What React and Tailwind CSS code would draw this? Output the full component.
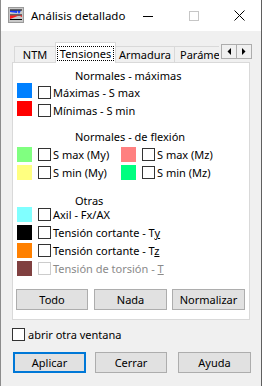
import React from "react";

function Check({ disabled }) {
  return (
    <div
      className={
        disabled
          ? "w-[13px] h-[13px] shrink-0 bg-white border border-[#cccccc]"
          : "w-[13px] h-[13px] shrink-0 bg-white border border-[#333333]"
      }
    />
  );
}

function Row({ color, label, low, disabled }) {
  return (
    <div className="flex items-start">
      <div className={"w-[15px] h-[15px] mt-[1px] shrink-0 " + color} />
      <div
        className={
          (low ? "mt-[4px] " : "mt-[2px] ") + "ml-[6px] flex items-center h-[13px]"
        }
      >
        <Check disabled={disabled} />
        <span
          className={
            "ml-[2px] leading-[13px] whitespace-nowrap " +
            (disabled ? "text-[#8a8a8a]" : "text-black")
          }
        >
          {label}
        </span>
      </div>
    </div>
  );
}

function AppIcon() {
  return (
    <svg width="16" height="16" viewBox="0 0 16 16">
      <rect x="0.5" y="0.5" width="15" height="15" fill="#c8c8c8" stroke="#9a9a9a" />
      <polygon points="2,3.5 9,3.5 9,6 2,5" fill="#1a3cff" />
      <polygon points="9,3.5 13,3.5 11,7" fill="#1a3cff" />
      <line x1="2" y1="3" x2="14" y2="3" stroke="#000" strokeWidth="1" />
      <line x1="2" y1="8" x2="14" y2="8" stroke="#000" strokeWidth="1" />
      <polygon points="2,8.5 11,8.5 2,12" fill="#ff1a1a" />
      <polygon points="11,8.5 14,8.5 14,10" fill="#ff1a1a" />
      <line x1="2" y1="12.5" x2="14" y2="12.5" stroke="#000" strokeWidth="1" />
    </svg>
  );
}

export default function App() {
  return (
    <div className="w-[262px] h-[386px] overflow-hidden bg-[#f0f0f0] border-l border-r border-l-[#8c8c8c] border-r-[#5f5f5f] font-['Noto_Sans',sans-serif] text-[11px] text-black flex flex-col">
      {/* Title bar */}
      <div className="h-[31px] bg-white flex items-center shrink-0">
        <div className="ml-[7px] mt-[-1px]">
          <AppIcon />
        </div>
        <span className="ml-[7px] text-[11.5px] leading-[16px] whitespace-nowrap">
          Análisis detallado
        </span>
        <div className="ml-auto flex h-full">
          <div className="w-[46px] h-full flex items-center justify-center">
            <div className="w-[10px] h-px bg-black mt-[1px]" />
          </div>
          <div className="w-[46px] h-full flex items-center justify-center">
            <div className="w-[10px] h-[10px] border border-[#c6c6c6]" />
          </div>
          <div className="w-[45px] h-full flex items-center justify-center">
            <svg width="11" height="11" viewBox="0 0 11 11">
              <line x1="0.5" y1="0.5" x2="10.5" y2="10.5" stroke="#000" strokeWidth="1" />
              <line x1="10.5" y1="0.5" x2="0.5" y2="10.5" stroke="#000" strokeWidth="1" />
            </svg>
          </div>
        </div>
      </div>

      {/* Tabs */}
      <div className="flex mt-[11px] ml-[11px] h-[20px] relative z-10 shrink-0">
        <div className="w-[207px] h-full flex items-end overflow-visible">
          <div className="w-[207px] flex items-end overflow-hidden h-[21px] mb-[-1px]">
            <div className="w-[2px] shrink-0" />
            <div className="w-[41px] h-[16px] mb-[1px] shrink-0 border-l border-t border-[#d9d9d9] bg-[#f0f0f0] flex items-center justify-center leading-[16px]">
              NTM
            </div>
            <div className="w-[61px] h-[21px] shrink-0 border-l border-r border-t border-[#d9d9d9] bg-white pt-[3px] px-[1px]">
              <div className="h-[15px] border border-dotted border-black flex items-center justify-center leading-[12px]">
                Tensiones
              </div>
            </div>
            <div className="w-[59px] h-[16px] mb-[1px] shrink-0 border-t border-r border-[#d9d9d9] bg-[#f0f0f0] flex items-center justify-center leading-[16px]">
              Armadura
            </div>
            <div className="w-[62px] h-[16px] mb-[1px] shrink-0 border-t border-r border-[#d9d9d9] bg-[#f0f0f0] flex items-center pl-[5px] leading-[16px] whitespace-nowrap">
              Parámetros
            </div>
          </div>
        </div>
        <div className="ml-[2px] mt-[2px] flex h-[15px]">
          <div className="w-[16px] h-[15px] border border-[#adadad] bg-[#f0f0f0] flex items-center justify-center">
            <svg width="4" height="7" viewBox="0 0 4 7">
              <polygon points="4,0 4,7 0.5,3.5" fill="#000" />
            </svg>
          </div>
          <div className="w-[15px] h-[15px] border border-l-0 border-[#adadad] bg-[#f0f0f0] flex items-center justify-center">
            <svg width="4" height="7" viewBox="0 0 4 7">
              <polygon points="0,0 0,7 3.5,3.5" fill="#000" />
            </svg>
          </div>
        </div>
      </div>

      {/* Panel */}
      <div className="ml-[11px] w-[238px] h-[258px] shrink-0 bg-white border border-[#d9d9d9] flex flex-col pt-[7px] pl-[4px]">
        <div className="h-[12px] leading-[12px] pl-[58px] whitespace-nowrap">Normales - máximas</div>
        <div className="flex flex-col">
          <div className="h-[18px]">
            <Row color="bg-[#0080ff]" label="Máximas - S max" low />
          </div>
          <div className="h-[18px]">
            <Row color="bg-[#ff0000]" label="Mínimas - S min" low />
          </div>
        </div>

        <div className="mt-[13px] h-[12px] leading-[12px] pl-[58px] whitespace-nowrap">
          Normales - de flexión
        </div>
        <div className="mt-[3px] flex flex-col">
          <div className="h-[18px] flex">
            <div className="w-[104px]">
              <Row color="bg-[#80ff80]" label="S max (My)" />
            </div>
            <Row color="bg-[#ff8080]" label="S max (Mz)" />
          </div>
          <div className="h-[18px] flex">
            <div className="w-[104px]">
              <Row color="bg-[#ffff80]" label="S min (My)" />
            </div>
            <Row color="bg-[#00ff80]" label="S min (Mz)" />
          </div>
        </div>

        <div className="mt-[13px] h-[11px] leading-[12px] pl-[58px]">Otras</div>
        <div className="flex flex-col">
          <div className="h-[18px]">
            <Row color="bg-[#80ffff]" label="Axil - Fx/AX" />
          </div>
          <div className="h-[18px]">
            <Row
              color="bg-black"
              label={
                <>
                  Tensión cortante - T<span className="underline">y</span>
                </>
              }
            />
          </div>
          <div className="h-[18px]">
            <Row
              color="bg-[#ff8000]"
              label={
                <>
                  Tensión cortante - T<span className="underline">z</span>
                </>
              }
            />
          </div>
          <div className="h-[18px]">
            <Row
              color="bg-[#804040]"
              disabled
              label={
                <>
                  Tensión de torsión - <span className="underline">T</span>
                </>
              }
            />
          </div>
        </div>

        <div className="mt-[11px] flex">
          <button className="ml-[-1px] w-[72px] h-[21px] bg-[#e1e1e1] border border-[#adadad] flex items-center justify-center leading-[14px]">
            Todo
          </button>
          <button className="ml-[6px] w-[73px] h-[21px] bg-[#e1e1e1] border border-[#adadad] flex items-center justify-center leading-[14px]">
            Nada
          </button>
          <button className="ml-[5px] w-[73px] h-[21px] bg-[#e1e1e1] border border-[#adadad] flex items-center justify-center leading-[14px]">
            Normalizar
          </button>
        </div>
      </div>

      {/* Bottom */}
      <div className="mt-[8px] ml-[11px] flex items-center h-[13px] shrink-0">
        <Check />
        <span className="ml-[3px] leading-[13px]">abrir otra ventana</span>
      </div>

      <div className="mt-[11px] flex shrink-0">
        <button className="ml-[12px] w-[73px] h-[21px] bg-[#e1e1e1] border-2 border-[#0078d7] flex items-center justify-center leading-[14px]">
          Aplicar
        </button>
        <button className="ml-[9px] w-[72px] h-[21px] bg-[#e1e1e1] border border-[#adadad] flex items-center justify-center leading-[14px]">
          Cerrar
        </button>
        <button className="ml-[11px] w-[73px] h-[21px] bg-[#e1e1e1] border border-[#adadad] flex items-center justify-center leading-[14px]">
          Ayuda
        </button>
      </div>
    </div>
  );
}
